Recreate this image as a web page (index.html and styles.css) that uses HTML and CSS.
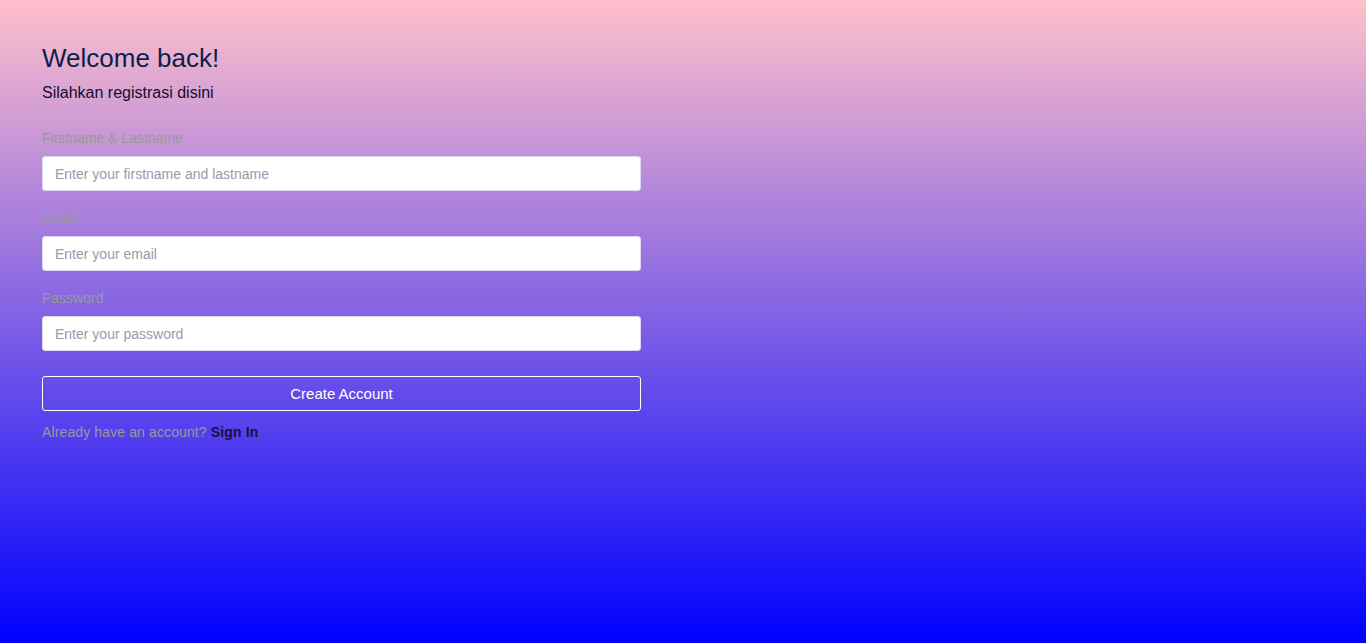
FILE: index.html
```html
<!DOCTYPE html>
<html lang="id">
<head>
<meta charset="utf-8">
<title>Register</title>
<link rel="stylesheet" href="styles.css">
</head>
<body>
<main class="page">
  <form class="form">
    <h1 class="title">Welcome back!</h1>
    <p class="subtitle">Silahkan registrasi disini</p>
    <label class="label label-first" for="name">Firstname &amp; Lastname</label>
    <input class="input" id="name" type="text" placeholder="Enter your firstname and lastname">
    <label class="label" for="email">Email</label>
    <input class="input" id="email" type="email" placeholder="Enter your email">
    <label class="label" for="password">Password</label>
    <input class="input" id="password" type="password" placeholder="Enter your password">
    <button class="button" type="button">Create Account</button>
    <p class="footer">Already have an account? <a class="link" href="#">Sign In</a></p>
  </form>
</main>
</body>
</html>
```
FILE: styles.css
```css
html, body {
  margin: 0;
  padding: 0;
  height: 100%;
}
body {
  background: linear-gradient(to bottom, #ffc0cb 0%, #0000ff 100%);
  font-family: "Liberation Sans", Arial, sans-serif;
  min-height: 643px;
}
.page {
  padding: 43px 0 0 42px;
}
.form {
  width: 599px;
  display: flex;
  flex-direction: column;
}
.title {
  margin: 0;
  font-size: 26px;
  line-height: 30px;
  font-weight: 400;
  color: #0b1f4b;
}
.subtitle {
  margin: 10px 0 0;
  font-size: 16px;
  line-height: 20px;
  color: #120f2e;
}
.label {
  margin-top: 19px;
  font-size: 14px;
  line-height: 16px;
  color: #999;
}
.label-first {
  margin-top: 27px;
}
.input {
  box-sizing: border-box;
  margin: 10px 0 0;
  height: 35px;
  width: 100%;
  padding: 0 12px;
  border: 1px solid #dcd8ef;
  border-radius: 3px;
  background: #fff;
  font-family: "Liberation Sans", Arial, sans-serif;
  font-size: 14px;
  color: #333;
  outline: none;
}
.input::placeholder {
  color: #9c98aa;
}
.button {
  box-sizing: border-box;
  margin-top: 25px;
  height: 35px;
  width: 100%;
  border: 1px solid #fff;
  border-radius: 3px;
  background: transparent;
  color: #fff;
  font-family: "Liberation Sans", Arial, sans-serif;
  font-size: 15px;
  cursor: pointer;
}
.footer {
  margin: 13px 0 0;
  font-size: 14px;
  line-height: 16px;
  letter-spacing: 0.12px;
  color: #999;
}
.link {
  color: #1a1238;
  font-weight: 700;
  letter-spacing: 0.15px;
  text-decoration: none;
}
```
